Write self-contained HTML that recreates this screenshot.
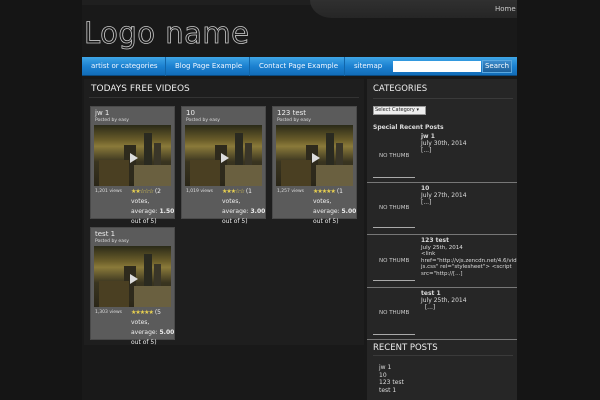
<!DOCTYPE html>
<html><head><meta charset="utf-8"><style>
*{margin:0;padding:0;box-sizing:border-box}
body{width:600px;height:400px;overflow:hidden;background:#151515;font-family:"DejaVu Sans","Liberation Sans",sans-serif;color:#ddd;position:relative}
.a{position:absolute}
#wrap{left:82px;top:0;width:435px;height:400px;background:#191919}
#top{left:310px;top:0;width:207px;height:18px;background:linear-gradient(#303030,#262626);border-bottom-left-radius:22px 18px}
#top2{left:82px;top:0;width:240px;height:5px;background:#1f1f1f}
#home{left:495px;top:5px;font-size:7px;color:#ccc}
#logo{left:84px;top:16px;font-size:29px;color:#191919;-webkit-text-stroke:0.8px #c8c8c8;font-family:"DejaVu Sans","Liberation Sans",sans-serif;font-weight:normal;letter-spacing:0.5px}
#nav{left:82px;top:57px;width:435px;height:19px;background:linear-gradient(#3fa6e6,#1a7fcf 55%,#136db8);border-bottom:1px solid #0a4a80}
.nv{top:0;height:19px;line-height:18px;font-size:7px;color:#f0f6ff;border-right:1px solid #1166aa;padding:0 9px;white-space:nowrap}
#srch{left:393px;top:61px;width:88px;height:11px;background:#fff}
#sbtn{left:482px;top:60px;width:30px;height:13px;background:linear-gradient(#3a8bcc,#1d5f99);border:1px solid #5aa8e0;font-size:7px;color:#fff;text-align:center;line-height:11px}
#main{left:84px;top:79px;width:280px;height:266px;background:#1e1e1e}
h2{position:absolute;font-weight:normal;font-size:9px;color:#eee}
.line{height:1px;background:#333}
.card{width:85px;height:113px;background:#5b5b5b;border:1px solid #4a4a4a}
.card .t{position:absolute;left:4px;top:2px;font-size:7px;color:#eee}
.card .p{position:absolute;left:4px;top:11px;font-size:4.5px;color:#ddd}
.card .im{position:absolute;left:3px;top:18px;width:77px;height:61px;overflow:hidden;background:linear-gradient(#2a2a18,#6b5e2a 25%,#8a7a3a 35%,#3a3520 60%,#2a2618)}
.card .v{position:absolute;left:4px;top:82px;font-size:4.5px;color:#ddd}
.card .r{position:absolute;left:40px;top:80px;font-size:6px;line-height:10px;color:#eee;width:44px}
.st{color:#e8d050;font-size:6px;letter-spacing:-1px}
#side{left:367px;top:79px;width:150px;height:321px;background:#262626;overflow:hidden}
.sp{position:absolute;left:6px;width:144px;font-size:6px;color:#ddd}
.nt{position:absolute;left:6px;top:34px;font-size:5.5px;color:#ccc}
.uln{position:absolute;left:0;top:56px;width:42px;height:1px;background:#aaa}
.sep{position:absolute;left:0;width:150px;height:1px;background:#777}
.tx{position:absolute;left:48px;top:0;font-size:6px;line-height:7px;color:#ddd;width:94px}
</style></head><body>
<div class="a" id="wrap"></div>
<div class="a" id="top2"></div>
<div class="a" id="top"></div>
<div class="a" id="home">Home</div>
<div class="a" id="logo">Logo name</div>
<div class="a" id="nav">
<div class="a nv" style="left:0;width:84px">artist or categories</div>
<div class="a nv" style="left:84px;width:84px">Blog Page Example</div>
<div class="a nv" style="left:168px;width:95px">Contact Page Example</div>
<div class="a nv" style="left:263px;border:none">sitemap</div>
</div>
<div class="a" id="srch"></div>
<div class="a" id="sbtn">Search</div>

<div class="a" id="main"></div>
<h2 style="left:91px;top:84px">TODAYS FREE VIDEOS</h2>
<div class="a line" style="left:89px;top:97px;width:270px"></div>

<div class="a card" style="left:90px;top:106px"><div class="t">jw 1</div><div class="p">Posted by easy</div><div class="im"><svg width="77" height="61"><rect x="50" y="8" width="8" height="45" fill="#2a2a20"/><rect x="60" y="18" width="7" height="35" fill="#3a3628"/><rect x="30" y="20" width="12" height="35" fill="#2e2a1c"/><rect x="5" y="35" width="30" height="26" fill="#4a3f22"/><rect x="40" y="40" width="37" height="21" fill="#6a6040"/><polygon points="36,28 44,33 36,38" fill="#ddd"/></svg></div><div class="v">1,201 views</div><div class="r"><span class="st">★★☆☆☆</span> (2 votes, average: <b>1.50</b> out of 5)</div></div>
<div class="a card" style="left:181px;top:106px"><div class="t">10</div><div class="p">Posted by easy</div><div class="im"><svg width="77" height="61"><rect x="50" y="8" width="8" height="45" fill="#2a2a20"/><rect x="60" y="18" width="7" height="35" fill="#3a3628"/><rect x="30" y="20" width="12" height="35" fill="#2e2a1c"/><rect x="5" y="35" width="30" height="26" fill="#4a3f22"/><rect x="40" y="40" width="37" height="21" fill="#6a6040"/><polygon points="36,28 44,33 36,38" fill="#ddd"/></svg></div><div class="v">1,019 views</div><div class="r"><span class="st">★★★☆☆</span> (1 votes, average: <b>3.00</b> out of 5)</div></div>
<div class="a card" style="left:272px;top:106px"><div class="t">123 test</div><div class="p">Posted by easy</div><div class="im"><svg width="77" height="61"><rect x="50" y="8" width="8" height="45" fill="#2a2a20"/><rect x="60" y="18" width="7" height="35" fill="#3a3628"/><rect x="30" y="20" width="12" height="35" fill="#2e2a1c"/><rect x="5" y="35" width="30" height="26" fill="#4a3f22"/><rect x="40" y="40" width="37" height="21" fill="#6a6040"/><polygon points="36,28 44,33 36,38" fill="#ddd"/></svg></div><div class="v">1,257 views</div><div class="r"><span class="st">★★★★★</span> (1 votes, average: <b>5.00</b> out of 5)</div></div>
<div class="a card" style="left:90px;top:227px"><div class="t">test 1</div><div class="p">Posted by easy</div><div class="im"><svg width="77" height="61"><rect x="50" y="8" width="8" height="45" fill="#2a2a20"/><rect x="60" y="18" width="7" height="35" fill="#3a3628"/><rect x="30" y="20" width="12" height="35" fill="#2e2a1c"/><rect x="5" y="35" width="30" height="26" fill="#4a3f22"/><rect x="40" y="40" width="37" height="21" fill="#6a6040"/><polygon points="36,28 44,33 36,38" fill="#ddd"/></svg></div><div class="v">1,303 views</div><div class="r"><span class="st">★★★★★</span> (5 votes, average: <b>5.00</b> out of 5)</div></div>

<div class="a" id="side">
<h2 style="left:6px;top:5px;font-size:8.5px">CATEGORIES</h2>
<div class="a line" style="left:6px;top:19px;width:140px;background:#3a3a3a"></div>
<div class="a" style="left:6px;top:27px;width:53px;height:9px;background:#eee;border:1px solid #999;font-size:5px;color:#222;line-height:7px;padding-left:1px">Select Category ▾</div>
<div class="sp" style="top:45px;font-weight:bold;font-size:6px">Special Recent Posts</div>
<div class="a" style="left:0;top:54px;width:150px;height:50px"><div class="nt" style="top:20px;left:12px">NO THUMB</div><div class="uln" style="left:6px;top:44px"></div><div class="tx" style="left:54px"><b>jw 1</b><br>July 30th, 2014<br>[...]</div></div>
<div class="sep" style="top:103px"></div>
<div class="a" style="left:0;top:106px;width:150px;height:50px"><div class="nt" style="top:20px;left:12px">NO THUMB</div><div class="uln" style="left:6px;top:42px"></div><div class="tx" style="left:54px"><b>10</b><br>July 27th, 2014<br>[...]</div></div>
<div class="sep" style="top:155px"></div>
<div class="a" style="left:0;top:159px;width:150px;height:50px"><div class="nt" style="top:20px;left:12px">NO THUMB</div><div class="uln" style="left:6px;top:42px"></div><div class="tx" style="left:54px;font-size:5.5px;line-height:6.5px"><b style="font-size:6px">123 test</b><br>July 25th, 2014<br>&lt;link href="http://vjs.zencdn.net/4.6/video-js.css" rel="stylesheet"&gt; &lt;script src="http://[...]</div></div>
<div class="sep" style="top:208px"></div>
<div class="a" style="left:0;top:211px;width:150px;height:50px"><div class="nt" style="top:20px;left:12px">NO THUMB</div><div class="uln" style="left:6px;top:44px"></div><div class="tx" style="left:54px"><b>test 1</b><br>July 25th, 2014<br>&nbsp;&nbsp;[...]</div></div>
<div class="sep" style="top:260px"></div>
<h2 style="left:6px;top:264px;font-size:8.5px">RECENT POSTS</h2>
<div class="a line" style="left:6px;top:276px;width:140px;background:#3a3a3a"></div>
<div class="a" style="left:12px;top:285px;font-size:6px;line-height:7.7px;color:#ddd">jw 1<br>10<br>123 test<br>test 1</div>
</div>
</body></html>
